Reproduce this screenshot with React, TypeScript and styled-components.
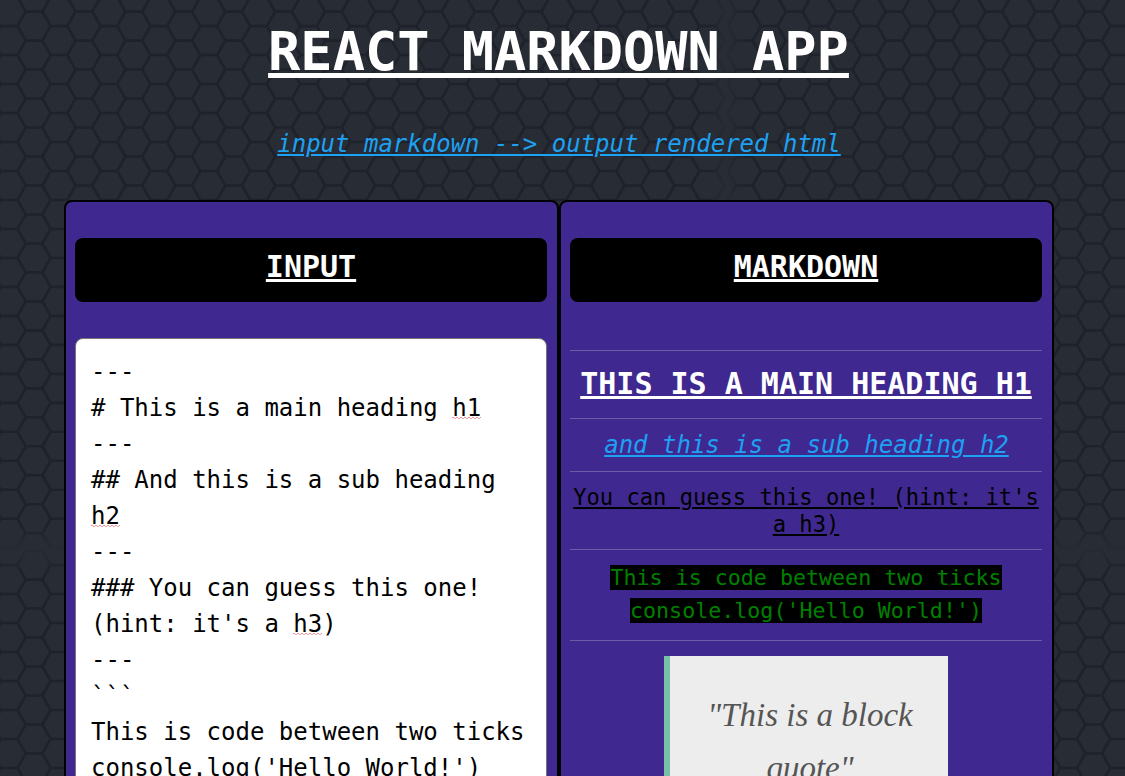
import React from "react";
import styled, { createGlobalStyle } from "styled-components";

const mono = '"DejaVu Sans Mono", monospace';
const blue = "#1da1f2";

const GlobalStyle = createGlobalStyle`
  * { box-sizing: border-box; }
  html, body {
    margin: 0;
    height: 776px;
    overflow: hidden;
    background: #282c34;
  }
`;

const Page = styled.div`
  position: relative;
  height: 776px;
  overflow: hidden;
  background: #282c34;
  font-family: ${mono};
  color: #000;
`;

const Backdrop = styled.svg`
  position: absolute;
  top: 0;
  left: 0;
  display: block;
`;

const Content = styled.div`
  position: relative;
  width: 1117px;
  padding-top: 20px;
  text-align: center;
`;

const Title = styled.h1<{ $size: number; $line: number }>`
  margin: 0;
  color: #fff;
  font-size: ${(p) => p.$size}px;
  line-height: ${(p) => p.$line}px;
  font-weight: bold;
  text-transform: uppercase;
  text-decoration: underline;
`;

const Subtitle = styled.h2<{ $space: string }>`
  margin: ${(p) => p.$space};
  padding-left: 1px;
  color: ${blue};
  font-size: 24px;
  line-height: 29px;
  font-weight: normal;
  font-style: italic;
  text-transform: lowercase;
  text-decoration: underline;
`;

const Columns = styled.main`
  display: flex;
  margin-left: 64px;
`;

const Panel = styled.section`
  width: 495px;
  height: 1100px;
  padding: 36px 10px 0 9px;
  border: 2px solid #000;
  border-radius: 8px;
  background: #3f288f;
`;

const PanelHeader = styled.header`
  height: 64px;
  padding-top: 11px;
  border-radius: 8px;
  background: #000;
`;

const Editor = styled.div`
  height: 800px;
  margin-top: 36px;
  padding: 15px;
  border: 1px solid #767676;
  border-radius: 8px;
  background: #fff;
  font-size: 24px;
  line-height: 36px;
  text-align: left;
  white-space: pre-wrap;
`;

const Misspelled = styled.span`
  background-image:
    linear-gradient(90deg, #f08f8f 50%, transparent 50%),
    linear-gradient(90deg, transparent 50%, #f4a5a5 50%);
  background-size: 4px 1px, 4px 1px;
  background-position: 0 23px, 0 24px;
  background-repeat: repeat-x;
`;

const Preview = styled.article`
  padding-top: 48px;
`;

const Rule = styled.hr`
  height: 1px;
  margin: 0;
  border: 0;
  background: #6e5ba7;
`;

const HeadingBlock = styled.div`
  padding: 15px 0 16px;
`;

const SmallHeading = styled.h3`
  margin: 0;
  padding: 12px 0 11px;
  font-size: 22.1px;
  line-height: 27px;
  font-weight: normal;
  text-decoration: underline;
`;

const CodeBlock = styled.pre`
  margin: 0;
  padding: 11px 0 13px;
  font-family: ${mono};
  font-size: 21.67px;
  line-height: 33px;
`;

const Code = styled.code`
  font-family: inherit;
  color: #008000;
  background: #000;
`;

const Quote = styled.blockquote`
  width: 284px;
  height: 240px;
  margin: 15px auto 0;
  padding: 33px 30px 33px 32px;
  border-left: 6px solid #78c0a8;
  background: #ededed;
  color: #555;
  font-family: "Liberation Serif", serif;
  font-size: 33px;
  font-style: italic;
  line-height: 53px;
`;

const CELL_W = 49.9;
const CELL_H = 28.98;

// Each cell draws one hexagon's top and left sides plus the bar to its neighbour.
function honeycomb(x0: number, y0: number, width: number, height: number) {
  let d = "";
  for (let x = x0 - CELL_W; x < width + CELL_W; x += CELL_W) {
    for (let y = y0 - CELL_H; y < height + CELL_H; y += CELL_H) {
      const px = (n: number) => (x + n).toFixed(2);
      const mid = (y + CELL_H / 2).toFixed(2);
      const top = y.toFixed(2);
      const bottom = (y + CELL_H).toFixed(2);
      d += `M${px(8.32)} ${bottom}L${px(0)} ${mid}L${px(8.32)} ${top}H${px(24.96)}L${px(33.28)} ${mid}H${px(CELL_W)}`;
      d += `M${px(33.28)} ${mid}L${px(24.96)} ${bottom}`;
    }
  }
  return d;
}

// The texture restarts at each seam, so every quadrant has its own phase.
const tiles = [
  { left: 0, top: 0, width: 726, height: 549, x: 17.4, y: 11.6 },
  { left: 726, top: 0, width: 399, height: 549, x: 1.7, y: 11.6 },
  { left: 0, top: 549, width: 726, height: 227, x: 17.4, y: 1.6 },
  { left: 726, top: 549, width: 399, height: 227, x: 1.7, y: 1.6 },
];

function Hexagons() {
  return (
    <Backdrop width="1125" height="776" aria-hidden="true">
      <defs>
        {["x", "y"].map((axis) => (
          <linearGradient
            key={axis}
            id={`fade-${axis}`}
            x1="0"
            y1="0"
            x2={axis === "x" ? 1 : 0}
            y2={axis === "y" ? 1 : 0}
          >
            <stop offset="0" stopColor="#282c34" stopOpacity="0" />
            <stop offset=".5" stopColor="#282c34" stopOpacity=".85" />
            <stop offset="1" stopColor="#282c34" stopOpacity="0" />
          </linearGradient>
        ))}
      </defs>
      {tiles.map((t) => (
        <svg
          key={`${t.left}-${t.top}`}
          x={t.left}
          y={t.top}
          width={t.width}
          height={t.height}
          overflow="hidden"
        >
          <path
            d={honeycomb(t.x, t.y, t.width, t.height)}
            fill="none"
            stroke="#1f222a"
            strokeWidth="2.6"
          />
        </svg>
      ))}
      <rect x="706" y="0" width="40" height="776" fill="url(#fade-x)" />
      <rect x="0" y="525" width="1125" height="48" fill="url(#fade-y)" />
    </Backdrop>
  );
}

export default function App() {
  return (
    <Page>
      <GlobalStyle />
      <Hexagons />
      <Content>
        <Title $size={53.6} $line={64}>React Markdown App</Title>
        <Subtitle $space="46px 0 41px">{"input markdown --> output rendered html"}</Subtitle>
        <Columns>
          <Panel>
            <PanelHeader>
              <Title as="h2" $size={30} $line={36}>Input</Title>
            </PanelHeader>
            <Editor role="textbox" aria-multiline="true">
              {"---\n# This is a main heading "}
              <Misspelled>h1</Misspelled>
              {"\n---\n## And this is a sub heading "}
              <Misspelled>h2</Misspelled>
              {"\n---\n### You can guess this one! (hint: it's a "}
              <Misspelled>h3</Misspelled>
              {")\n---\n```\nThis is code between two ticks\nconsole.log('Hello World!')\n```"}
            </Editor>
          </Panel>
          <Panel>
            <PanelHeader>
              <Title as="h2" $size={30} $line={36}>Markdown</Title>
            </PanelHeader>
            <Preview>
              <Rule />
              <HeadingBlock>
                <Title $size={30} $line={36}>This is a main heading h1</Title>
              </HeadingBlock>
              <Rule />
              <Subtitle $space="12px 0 11px">And this is a sub heading h2</Subtitle>
              <Rule />
              <SmallHeading>You can guess this one! (hint: it's a h3)</SmallHeading>
              <Rule />
              <CodeBlock>
                <Code>{"This is code between two ticks\nconsole.log('Hello World!')"}</Code>
              </CodeBlock>
              <Rule />
              <Quote>"This is a block quote"</Quote>
            </Preview>
          </Panel>
        </Columns>
      </Content>
    </Page>
  );
}
